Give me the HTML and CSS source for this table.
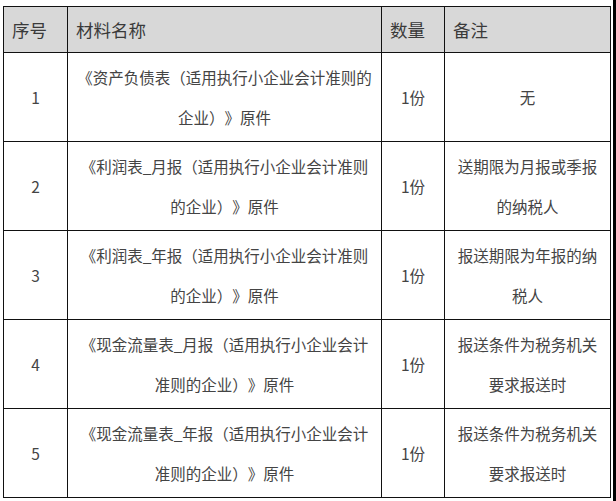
FILE: index.html
```html
<!DOCTYPE html>
<html lang="zh-CN">
<head>
<meta charset="utf-8">
<title>材料清单</title>
<link rel="stylesheet" href="styles.css">
</head>
<body>
<div class="page">
  <table class="materials">
    <colgroup>
      <col class="c-no">
      <col class="c-name">
      <col class="c-qty">
      <col class="c-note">
    </colgroup>
    <thead>
      <tr>
        <th>序号</th>
        <th>材料名称</th>
        <th>数量</th>
        <th>备注</th>
      </tr>
    </thead>
    <tbody>
      <tr>
        <td>1</td>
        <td>《资产负债表（适用执行小企业会计准则的<br>企业）》原件</td>
        <td>1份</td>
        <td>无</td>
      </tr>
      <tr>
        <td>2</td>
        <td>《利润表_月报（适用执行小企业会计准则<br>的企业）》原件</td>
        <td>1份</td>
        <td>送期限为月报或季报<br>的纳税人</td>
      </tr>
      <tr class="short">
        <td>3</td>
        <td>《利润表_年报（适用执行小企业会计准则<br>的企业）》原件</td>
        <td>1份</td>
        <td>报送期限为年报的纳<br>税人</td>
      </tr>
      <tr>
        <td>4</td>
        <td>《现金流量表_月报（适用执行小企业会计<br>准则的企业）》原件</td>
        <td>1份</td>
        <td>报送条件为税务机关<br>要求报送时</td>
      </tr>
      <tr class="short">
        <td>5</td>
        <td>《现金流量表_年报（适用执行小企业会计<br>准则的企业）》原件</td>
        <td>1份</td>
        <td>报送条件为税务机关<br>要求报送时</td>
      </tr>
    </tbody>
  </table>
  <div class="edge"></div>
</div>
</body>
</html>
```

FILE: styles.css
```css
html, body {
  margin: 0;
  padding: 0;
  background: #ffffff;
}

.page {
  display: flex;
  align-items: flex-start;
  width: 616px;
  height: 501px;
  padding: 6px 0 0 3px;
  box-sizing: border-box;
  font-family: "Noto Sans CJK SC", "Noto Sans", sans-serif;
  text-spacing-trim: space-all;
}

.materials {
  border-collapse: collapse;
  table-layout: fixed;
  width: 607px;
}

.c-no { width: 64px; }
.c-name { width: 314px; }
.c-qty { width: 63px; }
.c-note { width: 166px; }

.materials th,
.materials td {
  border: 1px solid #111111;
  box-sizing: border-box;
}

.materials th {
  background: #d8d8d8;
  color: #3a3a3a;
  font-weight: normal;
  font-size: 17.5px;
  text-align: left;
  padding: 0 8px;
  height: 46px;
  line-height: 44px;
}

.materials td {
  color: #444444;
  font-size: 15.5px;
  text-align: center;
  vertical-align: middle;
  line-height: 40px;
  padding: 4px 4px;
  white-space: nowrap;
  height: 89px;
}

.materials tr.short td {
  height: 88px;
}

.edge {
  width: 3px;
  height: 501px;
  margin-top: -6px;
  margin-left: auto;
  background: #000000;
}
```
